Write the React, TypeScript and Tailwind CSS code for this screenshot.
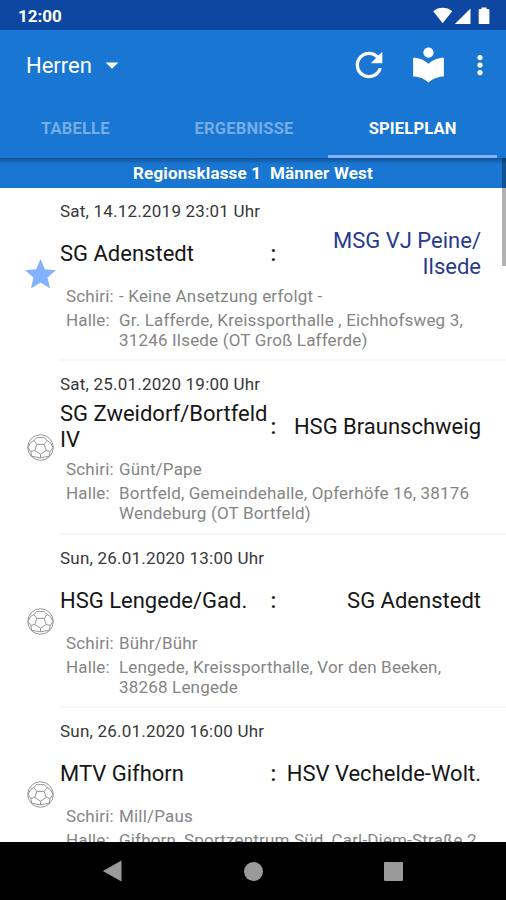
import type { ReactNode } from 'react';

type Match = {
  date: string;
  home: string[];
  guest: string[];
  highlight?: boolean;
  starred?: boolean;
  referee: string;
  hall: string[];
};

const matches: Match[] = [
  {
    date: 'Sat, 14.12.2019 23:01 Uhr',
    home: ['SG Adenstedt'],
    guest: ['MSG VJ Peine/', 'Ilsede'],
    highlight: true,
    starred: true,
    referee: '- Keine Ansetzung erfolgt -',
    hall: ['Gr. Lafferde, Kreissporthalle , Eichhofsweg 3,', '31246 Ilsede (OT Groß Lafferde)'],
  },
  {
    date: 'Sat, 25.01.2020 19:00 Uhr',
    home: ['SG Zweidorf/Bortfeld', 'IV'],
    guest: ['HSG Braunschweig'],
    referee: 'Günt/Pape',
    hall: ['Bortfeld, Gemeindehalle, Opferhöfe 16, 38176', 'Wendeburg (OT Bortfeld)'],
  },
  {
    date: 'Sun, 26.01.2020 13:00 Uhr',
    home: ['HSG Lengede/Gad.'],
    guest: ['SG Adenstedt'],
    referee: 'Bühr/Bühr',
    hall: ['Lengede, Kreissporthalle, Vor den Beeken,', '38268 Lengede'],
  },
  {
    date: 'Sun, 26.01.2020 16:00 Uhr',
    home: ['MTV Gifhorn'],
    guest: ['HSV Vechelde-Wolt.'],
    referee: 'Mill/Paus',
    hall: ['Gifhorn, Sportzentrum Süd, Carl-Diem-Straße 2,'],
  },
];

function Icon({ className, children }: { className: string; children: ReactNode }) {
  return (
    <svg viewBox="0 0 24 24" fill="currentColor" className={className}>
      {children}
    </svg>
  );
}

function Lines({ lines }: { lines: string[] }) {
  return lines.map((line) => <div key={line}>{line}</div>);
}

function StatusBar() {
  return (
    <div className="flex h-[30px] shrink-0 items-center justify-between bg-[#0d47a1] pl-[18px] pr-[15px] text-white">
      <span className="pt-[2px] text-[17px] font-bold leading-[20px]">12:00</span>
      <svg width="58" height="18" viewBox="0 0 58 18" fill="currentColor" className="mt-px">
        <path d="M0.2 4.2C5.500 -0.4 13.900 -0.4 19.200 4.2L9.700 16.2Z" />
        <path d="M37.500 1.500V17H21.800Z" />
        <path d="M48.500 0.500h5v1.600h2a.9.9 0 0 1 .9.9v13.200a.9.9 0 0 1-.9.9h-8.900a.9.9 0 0 1-.9-.9V3a.9.9 0 0 1 .9-.9h1.900Z" />
      </svg>
    </div>
  );
}

function Toolbar() {
  return (
    <div className="flex h-[69px] items-center pl-[26px] pr-[11px]">
      <span className="pt-[2px] text-[22px] leading-[28px]">Herren</span>
      <Icon className="ml-[5px] h-[30px] w-[30px]">
        <path d="M7 10l5 5 5-5z" />
      </Icon>
      <div className="ml-auto flex items-center">
        <Icon className="h-10 w-10">
          <path d="M17.65 6.35C16.2 4.9 14.21 4 12 4c-4.42 0-7.99 3.58-7.99 8s3.57 8 7.99 8c3.73 0 6.84-2.55 7.73-6h-2.080c-.82 2.330-3.040 4-5.650 4-3.310 0-6-2.690-6-6s2.690-6 6-6c1.660 0 3.140.690 4.220 1.780L13 11h7V4l-2.350 2.350z" />
        </Icon>
        <Icon className="ml-[19px] h-[41px] w-[41px]">
          <path d="M12 11.55C9.64 9.35 6.48 8 3 8v11c3.48 0 6.64 1.35 9 3.55 2.36-2.19 5.52-3.55 9-3.55V8c-3.48 0-6.64 1.35-9 3.55zM12 8c1.66 0 3-1.34 3-3s-1.34-3-3-3-3 1.34-3 3 1.34 3 3 3z" />
        </Icon>
        <Icon className="ml-[16px] h-[30px] w-[30px]">
          <circle cx="12" cy="6" r="2.1" />
          <circle cx="12" cy="12" r="2.1" />
          <circle cx="12" cy="18" r="2.1" />
        </Icon>
      </div>
    </div>
  );
}

function Tabs() {
  return (
    <div className="-ml-[9px] mr-[9px] grid h-[59px] grid-cols-3 text-[16.5px] font-bold leading-[20px] tracking-[0.2px]">
      <div className="flex items-center justify-center text-[#75ade7]">TABELLE</div>
      <div className="flex items-center justify-center text-[#75ade7]">ERGEBNISSE</div>
      <div className="flex items-center justify-center border-b-[3px] border-[#82b1ff] pt-[3px]">SPIELPLAN</div>
    </div>
  );
}

function Ball() {
  return (
    <svg viewBox="0 0 26 26" fill="none" stroke="#8f8f8f" strokeWidth="0.9" className="h-[27px] w-[27px] shrink-0">
      <circle cx="13" cy="13" r="12.300" />
      <path d="M9.500 10h7l2 5.800-5.500 3.700-5.500-3.700ZM9.500 10 6.600 6.300M16.500 10l2.900-3.700M18.500 15.800l3.800 1M7.500 15.800l-3.800 1M13 19.500V23M6.600 6.300 9.500 3.500h7l2.900 2.800M6.600 6.300 3.200 8.500 1 13l2.700 3.800.8 4.600M19.400 6.300l3.400 2.200L25 13l-2.700 3.800-.8 4.600M4.500 21.400l4.500.8L13 23l4-.8 4.500-.8" />
    </svg>
  );
}

function MatchRow({ match }: { match: Match }) {
  return (
    <div className="flex h-[173.5px] shrink-0">
      <div className="flex w-[60px] shrink-0 items-start justify-center pl-[20px] pt-[67px]">
        {match.starred ? (
          <Icon className="mt-px h-[37px] w-[37px] shrink-0 text-[#82b1ff]">
            <path d="M12 17.27L18.18 21l-1.640-7.030L22 9.240l-7.190-.610L12 2 9.190 8.630 2 9.240l5.460 4.730L5.820 21z" />
          </Icon>
        ) : (
          <div className="pt-[6px]">
            <Ball />
          </div>
        )}
      </div>
      <div className="min-w-0 flex-1 border-b-2 border-[#f7f7f7] pt-[13px]">
        <div className="text-[17px] leading-[20px] tracking-[0.22px] text-[#383838]">{match.date}</div>
        <div className="mt-[7px] flex h-[52px] items-center pr-[25px] text-[22px] leading-[26px] text-[#161616]">
          <div className="w-[208px] shrink-0 whitespace-nowrap">
            <Lines lines={match.home} />
          </div>
          <div className="w-[11px] shrink-0 text-center font-medium">:</div>
          <div className={match.highlight ? 'flex-1 whitespace-nowrap text-right text-[#283a90]' : 'flex-1 whitespace-nowrap text-right'}>
            <Lines lines={match.guest} />
          </div>
        </div>
        <div className="mt-[6px] flex pl-[6px] text-[17px] leading-[20px] tracking-[0.18px] text-[#858585]">
          <span className="w-[53px] shrink-0">Schiri:</span>
          <span>{match.referee}</span>
        </div>
        <div className="mt-[4px] flex pl-[6px] text-[17px] leading-[20px] tracking-[0.18px] text-[#858585]">
          <span className="w-[53px] shrink-0">Halle:</span>
          <div className="whitespace-nowrap">
            <Lines lines={match.hall} />
          </div>
        </div>
      </div>
    </div>
  );
}

function NavigationBar() {
  return (
    <div className="flex h-[58px] shrink-0 items-center justify-between bg-black pl-[102px] pr-[103px] text-[#9a9a9a]">
      <svg width="20" height="22" viewBox="0 0 20 22" fill="currentColor">
        <path d="M0.800 11 19.500 0.500V21.500Z" />
      </svg>
      <div className="ml-[1px] h-[19px] w-[19px] rounded-full bg-current" />
      <div className="mt-px h-[19px] w-[19px] rounded-[1px] bg-current" />
    </div>
  );
}

export default function App() {
  return (
    <div className="flex h-[900px] w-[506px] flex-col overflow-hidden bg-white font-['Roboto','Liberation_Sans',sans-serif]">
      <StatusBar />
      <header className="shrink-0 bg-[#1976d2] text-white">
        <Toolbar />
        <Tabs />
      </header>
      <main className="relative flex min-h-0 flex-1 flex-col overflow-hidden">
        <div className="flex h-[29.5px] shrink-0 items-center justify-center whitespace-pre bg-[#1976d2] pt-px text-[17px] font-bold leading-[20px] tracking-[0.18px] text-white">
          Regionsklasse 1  Männer West
        </div>
        <div className="flex flex-col pt-[0.2px]">
          {matches.map((match) => (
            <MatchRow key={match.date} match={match} />
          ))}
        </div>
        <div className="absolute inset-x-0 top-0 h-[6px] bg-linear-to-b from-black/30 to-transparent" />
        <div className="absolute right-0 top-0 h-[108px] w-[4px] bg-black/30" />
      </main>
      <NavigationBar />
    </div>
  );
}
